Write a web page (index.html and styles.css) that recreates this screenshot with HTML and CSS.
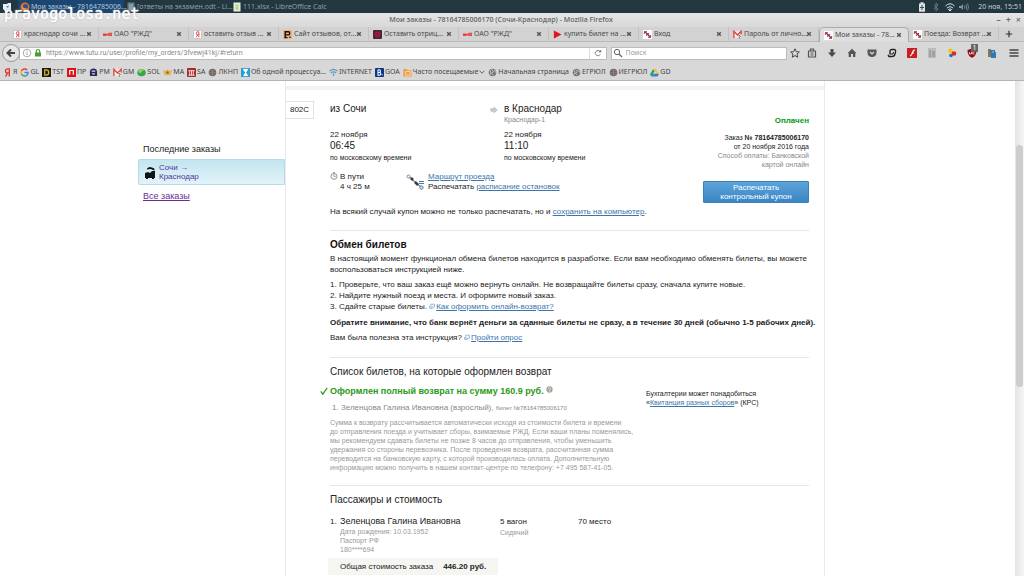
FILE: index.html
```html
<!DOCTYPE html>
<html lang="ru">
<head>
<meta charset="utf-8">
<title>Мои заказы - 78164785006170 (Сочи-Краснодар)</title>
<link rel="stylesheet" href="styles.css">
</head>
<body>
<svg class="defs" aria-hidden="true">
  <symbol id="ya" viewBox="0 0 10 10"><rect x=".5" y=".5" width="9" height="9" rx="1" fill="#fff" stroke="#c9b9b9"/><path d="M6.500 8V2H5.200Q3.600 2 3.600 3.600T5.200 5.200H6.500M5.200 5.200L3.600 8" fill="none" stroke="#d8393b"/></symbol>
  <symbol id="ya-red" viewBox="0 0 10 10"><path d="M7 9.500V1H5.200Q2.800 1 2.800 3.200T5.200 5.400H7M5.200 5.400L2.800 9.500" fill="none" stroke="#e0363a" stroke-width="1.500"/></symbol>
  <symbol id="rzd" viewBox="0 0 10 10"><path d="M0 6V4.500H3V6H0M3.500 6L5 4.500H7V3.700H9.500V6H6.500V4.500" fill="none" stroke="#e5483f" stroke-width="1.500"/></symbol>
  <symbol id="pletter" viewBox="0 0 10 10"><rect width="10" height="10" fill="#f2b27b"/><path d="M2.500 8.500V2H6Q7.500 2 7.500 3.700T6 5.400H3M1.500 8.500H5M7 8H8.500" fill="none" stroke="#111" stroke-width="1.600"/></symbol>
  <symbol id="darkred" viewBox="0 0 10 10"><rect width="10" height="10" rx="1" fill="#46283a"/><circle cx="5" cy="5" r="2.700" fill="#8e1836" stroke="#c0143c"/></symbol>
  <symbol id="play" viewBox="0 0 10 10"><path d="M1 .5L9.500 5 1 9.500z" fill="#e3151c"/></symbol>
  <symbol id="tutu" viewBox="0 0 10 10"><rect width="10" height="10" fill="#fff"/><path d="M1.500 1.500L5 4.500 8.500 8.500" stroke="#333" stroke-width="1.300" fill="none"/><path d="M1 4L4 1.500M3.500 6L6.500 3.500M6 8.500L9 6" stroke="#c51e42" stroke-width="1.400"/></symbol>
  <symbol id="gmail" viewBox="0 0 10 10"><path d="M1 1.500H9V8.500H1z" fill="#f7eeee"/><path d="M1 9V1.500L5 5.500 9 1.500V5" fill="none" stroke="#d8453c" stroke-width="1.500"/><path d="M6 6.500Q8.500 5.500 8 7.500L7 8.500V9.500" stroke="#555" fill="none"/></symbol>
  <symbol id="google" viewBox="0 0 10 10"><g fill="none" stroke-width="1.600"><path d="M8 2.200A4 4 0 0 0 1.600 3.300" stroke="#e34133"/><path d="M1.600 3.300A4 4 0 0 0 1.600 6.700" stroke="#f4b400"/><path d="M1.600 6.700A4 4 0 0 0 7.600 8" stroke="#33a853"/><path d="M7.600 8A4 4 0 0 0 9 5H5" stroke="#4083ef"/></g></symbol>
  <symbol id="tst" viewBox="0 0 10 10"><rect width="10" height="10" fill="#1b1a16"/><path d="M3 2V8H4.500Q7.500 8 7.500 5T4.500 2z" fill="none" stroke="#d9b528" stroke-width="1.400"/></symbol>
  <symbol id="pr" viewBox="0 0 10 10"><rect width="10" height="10" fill="#df1118"/><path d="M3 7.500V2.800H7V7.500" fill="none" stroke="#fff" stroke-width="1.300"/></symbol>
  <symbol id="pm" viewBox="0 0 10 10"><path d="M2 1.500Q5-.5 8 1.500L9 4V9H1V4z" fill="#29275c"/><path d="M3 3.500H7M3.500 6.500H6.500" stroke="#d9d9ed" stroke-width="1.300"/></symbol>
  <symbol id="sol" viewBox="0 0 10 10"><ellipse cx="5" cy="5.300" rx="4.700" ry="3.800" fill="#36a545"/><path d="M1 4Q4 0 8 2.500 5 3 4 6" fill="#8fd36a"/></symbol>
  <symbol id="ma" viewBox="0 0 10 10"><path d="M0 2L3 3 5 1 7 3 10 2 8.500 8H1.500z" fill="#e0b75a"/><circle cx="5" cy="5" r="1.500" fill="#9b6531"/></symbol>
  <symbol id="sa" viewBox="0 0 10 10"><rect width="10" height="10" rx="1" fill="#a72a2b"/><path d="M1.500 3H8.500M3 3V8M5 3V8M7 3V8M1.500 8H8.500" stroke="#fff" fill="none" stroke-width=".9"/></symbol>
  <symbol id="globe" viewBox="0 0 10 10"><circle cx="5" cy="5" r="4.200" fill="#777"/><path d="M2 2.500Q5 5 2 7.500M4 1.500L6 4 4 6 6 8M7 2L8.500 5" stroke="#ccc" fill="none"/></symbol>
  <symbol id="globedark" viewBox="0 0 10 10"><circle cx="5" cy="5" r="4.200" fill="#6d6564"/><path d="M1 5H9M5 1V9M2 3H8M2 7H8" stroke="#958b89" stroke-width=".6"/></symbol>
  <symbol id="hour" viewBox="0 0 10 10"><rect width="10" height="10" fill="#2b9dd5"/><path d="M2.500 1.500H7.500L3 8.500H7.500L2.500 1.500" fill="#fff" stroke="#fff"/></symbol>
  <symbol id="wifi-blue" viewBox="0 0 10 10"><path d="M.5 3.500Q5-.5 9.500 3.500M2 5.500Q5 3 8 5.500M5 6V9" stroke="#5c9bc8" fill="none" stroke-width="1.400"/></symbol>
  <symbol id="goa" viewBox="0 0 10 10"><rect width="10" height="10" rx="1" fill="#0b3687"/><path d="M3.300 2V8H5Q6.500 8 6.500 6.500T5 5H3.300M3.300 2H4.800Q6 2 6 3.500T4.800 5M7.500 7.500H8.500" stroke="#fff" fill="none" stroke-width="1.200"/></symbol>
  <symbol id="folder" viewBox="0 0 10 10"><path d="M.5 1H4L5 2.500H9.500V9.500H.5z" fill="#ef9b45"/><path d="M3 4H8V8H3z" stroke="#fff0d8" fill="none" stroke-width=".8"/></symbol>
  <symbol id="drive" viewBox="0 0 10 10"><path d="M3.500 1H6.500L10 6.500H7z" fill="#f3c42e"/><path d="M3.500 1L0 7 1.500 9.500 5 3.500z" fill="#25a35d"/><path d="M3 6.500H10L8.500 9.500H1.500z" fill="#3b7cdb"/></symbol>
  <symbol id="x" viewBox="0 0 10 10"><path d="M2 2L8 8M8 2L2 8" stroke="#555" stroke-width="2.400"/></symbol>
  <symbol id="ext" viewBox="0 0 10 10"><path d="M3 2H9V7H3zM1 5V9H6" stroke="#7ca6cf" fill="none" stroke-width="1.300"/></symbol>
</svg>

<header class="chrome">
  <div class="taskbar">
    <svg class="ico" viewBox="0 0 10 10"><path d="M1 2H5L6 1H9V8L8 9H3L1 7z" fill="#e7f1fa"/><path d="M4 4.500L7 3.500 6 6z" fill="#3686c8"/></svg>
    <div class="task task-on"><svg class="ico" viewBox="0 0 10 10"><circle cx="5" cy="5" r="4.500" fill="#e5711f"/><circle cx="5.500" cy="4.500" r="2.500" fill="#29549b"/><path d="M1 3Q3 7 7 6 5 9 2 7z" fill="#f39b2b"/></svg>Мои заказы - 78164785006...</div>
    <div class="task"><svg class="ico" viewBox="0 0 10 10"><path d="M1.500 .5H8.500V9.500H1.500z" fill="#61808c"/><path d="M3 3H7M3 5H7M3 7H7" stroke="#a9bcc4"/></svg>[ответы на экзамен.odt - Li...</div>
    <div class="task"><svg class="ico" viewBox="0 0 10 10"><path d="M1.500 .5H8.500V9.500H1.500z" fill="#e9f2d8"/><path d="M3 3H7M3 5H7M3 7H7M5 3V8" stroke="#94b45d" stroke-width=".6"/></svg>111.xlsx - LibreOffice Calc</div>
    <div class="tray">
      <svg class="ico" viewBox="0 0 10 10"><path d="M3.500 .3H6.500V1.500H8V9.700H2V1.500H3.500z" fill="#dce2e4"/><path d="M5 3V8M3 5.500H7" stroke="#3c4e56"/></svg>
      <svg class="ico" viewBox="0 0 10 10"><path d="M3 3L7 7 5 9V1L7 3 3 7" stroke="#66777e" fill="none"/></svg>
      <svg class="ico" viewBox="0 0 10 10"><path d="M.5 4Q5-.5 9.500 4M2 6Q5 3 8 6M3.500 7.500Q5 6.300 6.500 7.500L5 9z" stroke="#dce2e4" fill="none"/></svg>
      <svg class="ico" viewBox="0 0 10 10"><path d="M0 4H2L4 2V8L2 6H0z" fill="#84939a"/><path d="M5.500 3.500Q6.500 5 5.500 6.500M7 2.500Q8.500 5 7 7.500M8.500 1.500Q10.500 5 8.500 8.500" stroke="#84939a" fill="none" stroke-width=".8"/></svg>
      <time>20 ноя, 15:51</time>
    </div>
  </div>
  <div class="watermark">pravogolosa.net</div>
  <div class="titlebar"><span>Мои заказы - 78164785006170 (Сочи-Краснодар) - Mozilla Firefox</span>
    <div class="winbtns"><button aria-label="Свернуть">–</button><button aria-label="Развернуть">+</button><button aria-label="Закрыть">×</button></div>
  </div>
  <nav class="tabs">
    <div class="tab"><svg class="fav"><use href="#ya"/></svg><span>краснодар сочи ...</span><button aria-label="Закрыть вкладку"><svg><use href="#x"/></svg></button></div>
    <div class="tab"><svg class="fav"><use href="#rzd"/></svg><span>ОАО "РЖД"</span><button aria-label="Закрыть вкладку"><svg><use href="#x"/></svg></button></div>
    <div class="tab"><svg class="fav"><use href="#ya"/></svg><span>оставить отзыв ...</span><button aria-label="Закрыть вкладку"><svg><use href="#x"/></svg></button></div>
    <div class="tab"><svg class="fav"><use href="#pletter"/></svg><span>Сайт отзывов, от...</span><button aria-label="Закрыть вкладку"><svg><use href="#x"/></svg></button></div>
    <div class="tab"><svg class="fav"><use href="#darkred"/></svg><span>Оставить отриц...</span><button aria-label="Закрыть вкладку"><svg><use href="#x"/></svg></button></div>
    <div class="tab"><svg class="fav"><use href="#rzd"/></svg><span>ОАО "РЖД"</span><button aria-label="Закрыть вкладку"><svg><use href="#x"/></svg></button></div>
    <div class="tab"><svg class="fav"><use href="#play"/></svg><span>купить билет на ...</span><button aria-label="Закрыть вкладку"><svg><use href="#x"/></svg></button></div>
    <div class="tab"><svg class="fav"><use href="#tutu"/></svg><span>Вход</span><button aria-label="Закрыть вкладку"><svg><use href="#x"/></svg></button></div>
    <div class="tab"><svg class="fav"><use href="#gmail"/></svg><span>Пароль от лично...</span><button aria-label="Закрыть вкладку"><svg><use href="#x"/></svg></button></div>
    <div class="tab tab-on"><svg class="fav"><use href="#tutu"/></svg><span>Мои заказы - 78...</span><button aria-label="Закрыть вкладку"><svg><use href="#x"/></svg></button></div>
    <div class="tab"><svg class="fav"><use href="#tutu"/></svg><span>Поезда: Возврат ...</span><button aria-label="Закрыть вкладку"><svg><use href="#x"/></svg></button></div>
    <button class="newtab" aria-label="Новая вкладка"><svg viewBox="0 0 10 10"><path d="M5 1V9M1 5H9" stroke="#333" stroke-width="1.500"/></svg></button>
  </nav>
  <div class="navbar">
    <button class="back" aria-label="Назад"><svg viewBox="0 0 10 10"><path d="M9 5H2M5 1.500L1.500 5 5 8.500" stroke="#444" stroke-width="2" fill="none"/></svg></button>
    <div class="field url">
      <svg class="ico" viewBox="0 0 10 10"><circle cx="5" cy="5" r="3.800" fill="none" stroke="#aaa"/><path d="M5 4.500V7M5 2.700V3.500" stroke="#999"/></svg>
      <svg class="ico" viewBox="0 0 10 10"><path d="M2 4.500H8V8.500H2z" fill="#4b9e33"/><path d="M3.300 5V3.300Q3.300 1.500 5 1.500T6.700 3.300V5" stroke="#4b9e33" fill="none" stroke-width="1.200"/></svg>
      <input aria-label="Адрес" value="https://www.tutu.ru/user/profile/my_orders/3fvewj41kj/#return">
      <button class="reload" aria-label="Обновить"><svg viewBox="0 0 10 10"><path d="M8 6.500A3.300 3.300 0 1 1 7.500 3" stroke="#666" fill="none"/><path d="M5.500 4H9V.8z" fill="#666"/></svg></button>
    </div>
    <div class="field search">
      <svg class="ico" viewBox="0 0 10 10"><circle cx="4" cy="4" r="2.700" fill="none" stroke="#666"/><path d="M6 6L9 9" stroke="#666" stroke-width="1.200"/></svg>
      <input aria-label="Поиск" placeholder="Поиск">
    </div>
    <div class="tools">
      <button aria-label="В закладки"><svg viewBox="0 0 10 10"><path d="M5 .8L6.300 3.700 9.300 4 7 6.100 7.700 9.200 5 7.600 2.300 9.200 3 6.100 .7 4 3.700 3.700z" fill="none" stroke="#444"/></svg></button>
      <button aria-label="Закладки"><svg viewBox="0 0 10 10"><path d="M1.500 3H8.500V9H1.500zM3.500 3V1H6.500V3M3.500 5H6.500M3.500 7H6.500" fill="none" stroke="#555" stroke-width="1.200"/></svg></button>
      <button aria-label="Загрузки"><svg viewBox="0 0 10 10"><path d="M3.500 1H6.500V4.500H9L5 9 1 4.500H3.500z" fill="#4c4c4c"/></svg></button>
      <button aria-label="Домой"><svg viewBox="0 0 10 10"><path d="M5 .8L9.500 5.300H8.300V9H6V6H4V9H1.700V5.300H.5z" fill="#555"/></svg></button>
      <button aria-label="Pocket"><svg viewBox="0 0 10 10"><path d="M.5 1.500H9.500V5Q9 9 5 9T.5 5z" fill="#555"/><path d="M3 4L5 6 7 4" stroke="#ddd" stroke-width="1.200" fill="none"/></svg></button>
      <button aria-label="Дополнение"><svg viewBox="0 0 10 10"><path d="M3 6.500V3.500Q3 1.500 5 1.500H7Q9 1.500 8.500 4L8 6Q7.500 8.500 5 8.500H2L1 7" fill="none" stroke="#222" stroke-width="1.400"/><path d="M3.500 6H6L6.500 4" fill="none" stroke="#222"/></svg></button>
      <button aria-label="Блокировка Flash"><svg viewBox="0 0 10 10"><rect width="10" height="10" fill="#c91e24"/><path d="M3 8Q5 7 5.500 4.500T8 2M4.500 5H7" stroke="#fff" fill="none" stroke-width="1.200"/></svg></button>
      <button aria-label="Отчёт"><svg viewBox="0 0 10 10"><rect x="1" width="8" height="10" fill="#bbb"/><path d="M3 2V9M5 4H8M5 6H8M5 8H8" stroke="#888"/></svg></button>
      <button aria-label="Цвета"><svg viewBox="0 0 10 10"><circle cx="3.500" cy="3" r="2.400" fill="#efc327"/><circle cx="7" cy="5.500" r="2.300" fill="#d92c29"/><circle cx="4" cy="7.500" r="1.800" fill="#3263c3"/></svg></button>
      <button class="shield" aria-label="Блокировщик"><svg viewBox="0 0 10 10"><path d="M5 .5L9.500 2Q9.500 8 5 9.800.5 8 .5 2z" fill="#980b16"/><path d="M2.500 4V6H4.500V4M7.500 4H5.800V6H7.500" stroke="#fff" fill="none" stroke-width=".7"/></svg><span class="badge">1</span></button>
      <button aria-label="Библиотека"><svg viewBox="0 0 10 10"><path d="M1 1H4V9H1z" fill="#8b7654"/><path d="M3 2H8V4H9V10H4z" fill="#3479b0"/><path d="M5 4H7" stroke="#9dc5df"/></svg></button>
      <button class="menu" aria-label="Меню"><svg viewBox="0 0 10 10"><path d="M.5 2H9.500M.5 5H9.500M.5 8H9.500" stroke="#444" stroke-width="1.500"/></svg></button>
    </div>
  </div>
  <nav class="bookmarks">
    <a href="#"><svg><use href="#ya-red"/></svg>Я</a>
    <a href="#"><svg><use href="#google"/></svg>GL</a>
    <a href="#"><svg><use href="#tst"/></svg>TST</a>
    <a href="#"><svg><use href="#pr"/></svg>ПР</a>
    <a href="#"><svg><use href="#pm"/></svg>РМ</a>
    <a href="#"><svg><use href="#gmail"/></svg>GM</a>
    <a href="#"><svg><use href="#sol"/></svg>SOL</a>
    <a href="#"><svg><use href="#ma"/></svg>МА</a>
    <a href="#"><svg><use href="#sa"/></svg>SA</a>
    <a href="#"><svg><use href="#globedark"/></svg>ЛКНП</a>
    <a href="#"><svg><use href="#hour"/></svg>Об одной процессуа...</a>
    <a href="#"><svg><use href="#wifi-blue"/></svg>INTERNET</a>
    <a href="#"><svg><use href="#goa"/></svg>GOA</a>
    <a href="#"><svg><use href="#folder"/></svg>Часто посещаемые<svg class="chev" viewBox="0 0 10 10"><path d="M1 3L5 7 9 3" fill="none" stroke="#555" stroke-width="1.500"/></svg></a>
    <a href="#"><svg><use href="#globe"/></svg>Начальная страница</a>
    <a href="#"><svg><use href="#globe"/></svg>ЕГРЮЛ</a>
    <a href="#"><svg><use href="#globedark"/></svg>ИЕГРЮЛ</a>
    <a href="#"><svg><use href="#drive"/></svg>GD</a>
  </nav>
</header>

<div class="page">
  <aside class="sidebar">
    <h2>Последние заказы</h2>
    <a class="order" href="#"><svg viewBox="0 0 12 13"><path d="M1 7L4 6 6 7 8 5H11V12H1z" fill="#101418"/><path d="M3 2.500Q5 0 8 1.500 11 2 10.500 4.500L9 4Q7 2.500 3 3.500z" fill="#101418"/><path d="M2 12.500H4M8 12.500H10" stroke="#101418"/></svg><span>Сочи →<br>Краснодар</span></a>
    <a class="all" href="#">Все заказы</a>
  </aside>

  <main class="article">
    <div class="train-no">802С</div>
    <div class="content">
      <section class="trip">
        <div class="trip-main">
          <div class="legs">
            <div class="leg">
              <h1>из Сочи</h1><p class="station">&nbsp;</p>
              <p class="date">22 ноября</p><p class="time">06:45</p><p class="zone">по московскому времени</p>
            </div>
            <div class="leg">
              <svg class="arrow" viewBox="0 0 10 10"><path d="M1 3.500H5V1.500L9 5 5 8.500V6.500H1z" fill="#ccc" stroke="#aaa" stroke-width=".7"/></svg>
              <h1>в Краснодар</h1><p class="station">Краснодар-1</p>
              <p class="date">22 ноября</p><p class="time">11:10</p><p class="zone">по московскому времени</p>
            </div>
          </div>
          <div class="route">
            <div class="dur"><svg viewBox="0 0 10 10"><circle cx="5" cy="5.500" r="3.700" fill="none" stroke="#777"/><path d="M5 3V5.500H7M4 .7H6" stroke="#777" fill="none"/></svg><p>В пути<br>4 ч 25 м</p></div>
            <div class="links"><svg viewBox="0 0 20 16"><path d="M2 2L16 14" stroke="#7b8792" stroke-width="1.300"/><path d="M5 4L7 6M9 8L12 11" stroke="#333d48" stroke-width="2.500"/><circle cx="2.500" cy="2.500" r="1.500" fill="#fff" stroke="#7b8792"/><circle cx="15.500" cy="13.500" r="1.700" fill="#cfdce9" stroke="#6482a4"/><path d="M13 7.500H18M13 9.500H18" stroke="#5479a3"/></svg><p><a href="#">Маршрут проезда</a><br>Распечатать <a href="#">расписание остановок</a></p></div>
          </div>
          <p class="save">На всякий случай купон можно не только распечатать, но и <a href="#">сохранить на компьютер</a>.</p>
        </div>
        <div class="pay">
          <p class="paid">Оплачен</p>
          <p>Заказ <b>№ 78164785006170</b><br>от 20 ноября 2016 года<br><span>Способ оплаты: Банковской<br>картой онлайн</span></p>
          <button>Распечатать<br>контрольный купон</button>
        </div>
      </section>

      <section class="exchange">
        <h3>Обмен билетов</h3>
        <p>В настоящий момент функционал обмена билетов находится в разработке. Если вам необходимо обменять билеты, вы можете<br>воспользоваться инструкцией ниже.</p>
        <p class="steps">1. Проверьте, что ваш заказ ещё можно вернуть онлайн. Не возвращайте билеты сразу, сначала купите новые.<br>2. Найдите нужный поезд и места. И оформите новый заказ.<br>3. Сдайте старые билеты. <svg class="ext"><use href="#ext"/></svg><a href="#">Как оформить онлайн-возврат?</a></p>
        <p><b>Обратите внимание, что банк вернёт деньги за сданные билеты не сразу, а в течение 30 дней (обычно 1-5 рабочих дней).</b></p>
        <p>Вам была полезна эта инструкция? <svg class="ext"><use href="#ext"/></svg><a href="#">Пройти опрос</a></p>
      </section>

      <section class="refund">
        <h2>Список билетов, на которые оформлен возврат</h2>
        <div class="refund-cols">
          <div class="refund-main">
            <p class="done"><svg class="check" viewBox="0 0 10 10"><path d="M1 5.500L3.500 9 9 1" stroke="#299a16" fill="none" stroke-width="1.500"/></svg>Оформлен полный возврат на сумму 160.9 руб. <svg class="help" viewBox="0 0 10 10"><circle cx="5" cy="5" r="4.500" fill="#a9a596"/><path d="M3.500 4Q3.500 2.500 5 2.500T6.500 4Q6.500 5 5 5.500V8" stroke="#eee" fill="none"/></svg></p>
            <p class="who">1. Зеленцова Галина Ивановна (взрослый), <small>билет №78164785006170</small></p>
            <p class="note">Сумма к возврату рассчитывается автоматически исходя из стоимости билета и времени<br>до отправления поезда и учитывает сборы, взимаемые РЖД. Если ваши планы поменялись,<br>мы рекомендуем сдавать билеты не позже 8 часов до отправления, чтобы уменьшить<br>удержания со стороны перевозчика. После проведения возврата, рассчитанная сумма<br>переводится на банковскую карту, с которой производилась оплата. Дополнительную<br>информацию можно получить в нашем контакт-центре по телефону: +7 495 587-41-05.</p>
          </div>
          <p class="kpc">Бухгалтерии может понадобиться<br>«<a href="#">Квитанция разных сборов</a>» (КРС)</p>
        </div>
      </section>

      <section class="people">
        <h2>Пассажиры и стоимость</h2>
        <div class="person">
          <span class="num">1.</span>
          <div><p class="name">Зеленцова Галина Ивановна</p><p class="sub">Дата рождения: 10.03.1952<br>Паспорт РФ<br>180****694</p></div>
          <div><p>5 вагон</p><p class="sub seat">Сидячий</p></div>
          <div><p>70 место</p></div>
        </div>
        <p class="total">Общая стоимость заказа <b>446.20 руб.</b></p>
      </section>
    </div>
  </main>
  <div class="scroll"><div class="thumb"></div></div>
</div>
</body>
</html>
```
FILE: styles.css
```css
* { box-sizing: border-box; margin: 0; padding: 0; }
body {
  display: flex; flex-direction: column; height: 100vh; overflow: hidden;
  background: #fff; color: #222;
  font: 8px/11px "Liberation Sans", Arial, sans-serif;
}
button { border: 0; background: none; font: inherit; color: inherit; display: flex; align-items: center; justify-content: center; }
input { border: 0; outline: 0; background: none; font: inherit; color: #888; min-width: 0; flex: 1; }
input::placeholder { color: #999; }
a { color: #3d74ab; }
.defs { position: absolute; width: 0; height: 0; }
.ico { width: 10px; height: 10px; flex: none; }

/* Desktop panel and browser chrome */
.chrome { position: relative; flex: none; font: 7px/10px "Noto Sans", sans-serif; color: #4a4a4a; background: #d6d6d6; border-bottom: 1px solid #b4b4b4; }
.taskbar { display: flex; align-items: center; height: 13px; padding: 0 2px; background: #22373f; color: #8fa0a7; }
.task { display: flex; align-items: center; gap: 1px; width: 106px; height: 13px; padding-left: 2px; white-space: nowrap; }
.task-on { background: #1b4672; color: #b3c6d6; margin-left: 6px; }
.tray { display: flex; align-items: center; gap: 4px; margin-left: auto; color: #c5d0d4; }
.tray time { margin-left: 5px; }
.watermark { position: absolute; left: 4px; top: 5px; font: 15px/18px "DejaVu Sans Mono", monospace; color: #fff; text-shadow: 0 0 1px #fff, 0 0 2px #999; }
.titlebar { display: flex; align-items: center; height: 14px; background: linear-gradient(#e6e6e6, #d8d8d8); font-family: "Open Sans", sans-serif; font-weight: 600; color: #666; }
.titlebar span { flex: 1; text-align: center; padding-left: 6px; }
.winbtns { display: flex; gap: 5px; padding-right: 3px; font-size: 9px; }
.tabs { display: flex; height: 15px; padding-left: 9px; background: #d2d2d2; border-bottom: 1px solid #b9b9b9; }
.tab { flex: 0 1 90px; min-width: 0; display: flex; align-items: center; gap: 2px; padding: 0 6px 0 4px; border-right: 1px solid #c2c2c2; white-space: nowrap; }
.tab span { flex: 1; min-width: 0; }
.tab svg { display: block; width: 6px; height: 6px; flex: none; }
.tab .fav { width: 9px; height: 9px; }
.tab-on { background: #dedede; border: 1px solid #aaa; border-bottom: 0; border-radius: 5px 5px 0 0; height: 15px; }
.newtab { width: 20px; }
.newtab svg { width: 8px; height: 8px; }
.navbar { display: flex; align-items: center; height: 22px; padding: 0 5px 0 2px; background: #d8d8d8; }
.back { width: 18px; height: 18px; border: 1px solid #999; border-radius: 50%; background: #e6e6e6; flex: none; z-index: 1; }
.back svg { width: 10px; height: 10px; }
.field { display: flex; align-items: center; height: 13px; background: #fff; border: 1px solid #bbb; gap: 1px; }
.url { flex: 582; margin-left: -1px; padding-left: 2px; }
.url input { padding-left: 2px; font-family: Roboto, sans-serif; }
.reload { width: 17px; height: 11px; border-left: 1px solid #ddd; }
.reload svg { width: 8px; height: 8px; }
.search { flex: 173; margin-left: 4px; padding-left: 1px; gap: 3px; }
.tools { display: flex; align-items: center; gap: 10px; margin-left: 7px; }
.tools svg { width: 10px; height: 10px; display: block; }
.tools button:nth-child(1) { margin-left: -4px; }
.tools button:nth-child(2) { margin-left: -3px; }
.tools .menu { margin-left: 2px; }
.shield { position: relative; }
.badge { position: absolute; left: 4px; top: -4px; width: 7px; height: 8px; background: #666; color: #fff; font-size: 7px; line-height: 8px; }
.bookmarks { display: flex; align-items: center; gap: 3px; height: 16px; padding: 0 3px; background: #d8d8d8; white-space: nowrap; }
.bookmarks a { display: flex; align-items: center; gap: 1px; color: #444; text-decoration: none; }
.bookmarks svg { width: 9px; height: 9px; flex: none; }
.bookmarks .chev { width: 6px; height: 6px; }

/* Page */
.page { flex: 1; min-height: 0; display: flex; }
.sidebar { flex: 0 0 285px; padding: 62px 0 0 138px; }
h1, h2 { font-size: 10px; line-height: 12px; font-weight: normal; }
.sidebar h2 { font-size: 9px; padding-left: 5px; }
.order { display: flex; align-items: center; gap: 3px; margin-top: 4px; padding: 3px 5px; border: 1px solid #b5dce8; background: linear-gradient(#c3e5f0, #e2f3f8); color: #5533a5; text-decoration: none; line-height: 9px; border-radius: 2px 0 0 2px; }
.order svg { width: 12px; height: 13px; flex: none; }
.all { display: inline-block; margin: 6px 0 0 5px; font-size: 9px; color: #6a2c91; }
.article { flex: 0 1 540px; display: flex; align-items: flex-start; overflow: hidden; border: solid #e9e9ee; border-width: 0 1px; background: linear-gradient(#f3f3f7, #f3f3f7) 0 5px / 100% 4px no-repeat; }
.train-no { width: 28px; height: 18px; margin-top: 20px; border: 1px solid #e2e2e2; border-left: 0; line-height: 16px; text-align: center; flex: none; }
.content { flex: 1; min-width: 0; margin: 22px 15px 0 16px; }
section { border-bottom: 1px solid #e6e6e6; }
.trip { display: flex; justify-content: space-between; padding-bottom: 13px; }
.legs { display: grid; grid-template-columns: 174px 1fr; }
.leg { position: relative; }
.arrow { position: absolute; left: -14px; top: 3px; width: 8px; height: 8px; }
.station { font-size: 7px; line-height: 10px; color: #888; }
.date { margin-top: 4px; }
.time { font-size: 10px; line-height: 12px; }
.zone, .pay p { font-size: 7px; }
.route { display: grid; grid-template-columns: 76px 1fr; margin-top: 9px; line-height: 10px; }
.dur, .links { display: flex; gap: 2px; }
.dur svg { width: 8px; height: 8px; }
.links svg { width: 20px; height: 16px; margin-top: 2px; }
.save { margin-top: 14px; }
.pay { width: 106px; flex: none; text-align: right; padding-top: 12px; }
.pay p { line-height: 9px; margin-bottom: 9px; white-space: nowrap; }
.pay span { color: #888; }
.pay .paid { font-size: 8px; line-height: 11px; font-weight: bold; color: #099b16; margin-bottom: 7px; }
.pay button { width: 100%; height: 22px; margin-top: 12px; background: linear-gradient(#5ca3da, #3a85c4); border: 1px solid #3c80b8; border-radius: 1px; color: #fff; line-height: 9px; font-size: 8px; }
.exchange { padding: 7px 0 14px; }
h3 { font-size: 10px; line-height: 13px; color: #111; margin-bottom: 2px; }
.exchange p { margin-bottom: 4px; white-space: nowrap; }
.exchange p:last-child { margin-bottom: 0; }
.exchange .steps { margin-bottom: 5px; }
.ext { width: 6px; height: 6px; margin-right: 1px; }
.refund { padding: 8px 0 13px; }
.refund-cols { display: flex; margin-top: 7px; }
.refund-main { width: 316px; white-space: nowrap; flex: none; }
.done { position: relative; font-size: 9px; line-height: 13px; font-weight: bold; color: #299a16; }
.check { position: absolute; left: -10px; top: 2px; width: 8px; height: 8px; }
.help { width: 7px; height: 7px; vertical-align: 1px; }
.who { font-size: 8px; color: #888; padding: 4px 0 4px 2px; }
.who small { font-size: 6px; }
.note { font-size: 7px; line-height: 9px; color: #999; }
.kpc { font-size: 7px; line-height: 9px; margin-top: 4px; white-space: nowrap; }
.people { padding-top: 8px; border: 0; }
.person { display: grid; grid-template-columns: 10px 160px 78px 1fr; margin-top: 10px; }
.name { font-size: 9px; }
.sub { font-size: 7px; line-height: 9px; color: #999; }
.seat { padding-top: 1px; }
.total { display: flex; gap: 10px; width: 170px; margin: 4px 0 0 -2px; padding: 2px 12px; line-height: 13px; background: #f5f5f1; white-space: nowrap; }
.scroll { width: 9px; margin-left: auto; padding: 64px 1px 0; background: linear-gradient(90deg, #e4e4e4, #f6f6f6); }
.thumb { height: 242px; border-radius: 4px; background: #cdcdcd; }
```
